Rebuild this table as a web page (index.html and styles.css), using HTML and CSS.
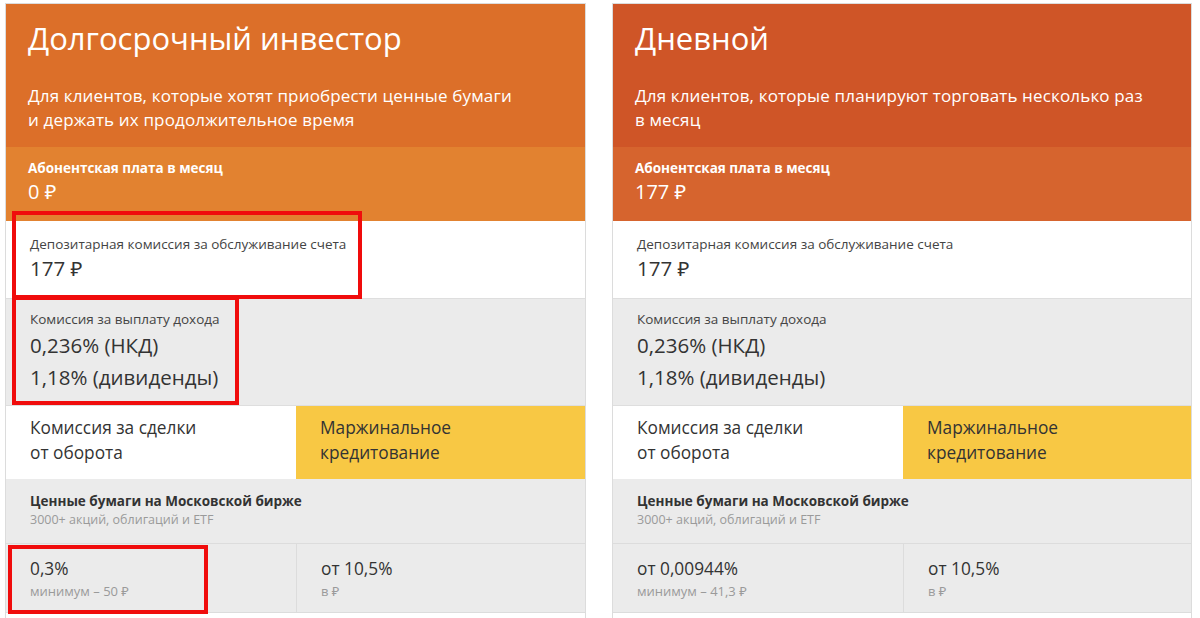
FILE: index.html
```html
<!DOCTYPE html>
<html lang="ru">
<head>
<meta charset="utf-8">
<title>Тарифы</title>
<link rel="stylesheet" href="styles.css">
</head>
<body>
<div class="page">
  <section class="card card-long">
    <header class="head">
      <h1 class="title">Долгосрочный инвестор</h1>
      <p class="desc">Для клиентов, которые хотят приобрести ценные бумаги<br>и держать их продолжительное время</p>
    </header>
    <div class="fee">
      <div class="fee-label">Абонентская плата в месяц</div>
      <div class="fee-value">0 ₽</div>
    </div>
    <div class="row row-white">
      <div class="row-label">Депозитарная комиссия за обслуживание счета</div>
      <div class="row-value">177 ₽</div>
    </div>
    <div class="row row-gray row-income">
      <div class="row-label">Комиссия за выплату дохода</div>
      <div class="row-value tall">0,236% (НКД)</div>
      <div class="row-value tall">1,18% (дивиденды)</div>
    </div>
    <div class="tabs">
      <div class="tab">Комиссия за сделки<br>от оборота</div>
      <div class="tab tab-active">Маржинальное<br>кредитование</div>
    </div>
    <div class="market">
      <div class="market-title">Ценные бумаги на Московской бирже</div>
      <div class="market-sub">3000+ акций, облигаций и ETF</div>
    </div>
    <div class="cells">
      <div class="cell">
        <div class="cell-value">0,3%</div>
        <div class="cell-sub">минимум – 50 ₽</div>
      </div>
      <div class="cell">
        <div class="cell-value">от 10,5%</div>
        <div class="cell-sub">в ₽</div>
      </div>
    </div>
    <div class="mark mark-1"></div>
    <div class="mark mark-2"></div>
    <div class="mark mark-3"></div>
  </section>

  <section class="card card-day">
    <header class="head">
      <h1 class="title">Дневной</h1>
      <p class="desc">Для клиентов, которые планируют торговать несколько раз<br>в месяц</p>
    </header>
    <div class="fee">
      <div class="fee-label">Абонентская плата в месяц</div>
      <div class="fee-value">177 ₽</div>
    </div>
    <div class="row row-white">
      <div class="row-label">Депозитарная комиссия за обслуживание счета</div>
      <div class="row-value">177 ₽</div>
    </div>
    <div class="row row-gray row-income">
      <div class="row-label">Комиссия за выплату дохода</div>
      <div class="row-value tall">0,236% (НКД)</div>
      <div class="row-value tall">1,18% (дивиденды)</div>
    </div>
    <div class="tabs">
      <div class="tab">Комиссия за сделки<br>от оборота</div>
      <div class="tab tab-active">Маржинальное<br>кредитование</div>
    </div>
    <div class="market">
      <div class="market-title">Ценные бумаги на Московской бирже</div>
      <div class="market-sub">3000+ акций, облигаций и ETF</div>
    </div>
    <div class="cells">
      <div class="cell">
        <div class="cell-value">от 0,00944%</div>
        <div class="cell-sub">минимум – 41,3 ₽</div>
      </div>
      <div class="cell">
        <div class="cell-value">от 10,5%</div>
        <div class="cell-sub">в ₽</div>
      </div>
    </div>
  </section>
</div>
</body>
</html>
```

FILE: styles.css
```css
* { box-sizing: border-box; }

html, body {
  margin: 0;
  padding: 0;
  background: #ffffff;
  font-family: "Open Sans", "Noto Sans", "Liberation Sans", sans-serif;
  color: #333333;
  overflow: hidden;
}

.page {
  display: flex;
  gap: 26px;
  padding: 3px 8px 0 5px;
  height: 618px;
}

.card {
  position: relative;
  width: 581px;
  height: 640px;
  border: 1px solid #dcdcdc;
  border-bottom: none;
  display: flex;
  flex-direction: column;
}

.card-day { width: 580px; }

/* header */
.head {
  height: 143px;
  padding: 14px 23px 0 22px;
  color: #ffffff;
}
.card-long .head { background: #dc6f29; }
.card-day .head { background: #cf5527; }

.title {
  margin: 0;
  font-weight: 400;
  font-size: 31px;
  line-height: 40px;
  letter-spacing: 0;
}

.desc {
  margin: 26px 0 0;
  font-size: 17px;
  line-height: 24px;
  letter-spacing: 0.15px;
}

/* monthly fee */
.fee {
  height: 74px;
  padding: 11px 22px 0;
  color: #ffffff;
}
.card-long .fee { background: #e28230; }
.card-day .fee { background: #d6642e; }

.fee-label {
  font-size: 13.5px;
  font-weight: 700;
  line-height: 20px;
  letter-spacing: 0;
}
.fee-value {
  font-size: 20px;
  line-height: 28px;
}

/* rows */
.row {
  padding: 13px 24px 0;
}
.row-white {
  height: 77px;
  background: #ffffff;
}
.row-gray {
  background: #ebebeb;
  border-top: 1px solid #dedede;
}
.row-income {
  height: 107px;
  padding-top: 10px;
}
.row-label {
  font-size: 13.5px;
  line-height: 20px;
  color: #444444;
  letter-spacing: 0;
}
.row-value {
  font-size: 20.5px;
  line-height: 28px;
  color: #333333;
}
.row-value.tall { line-height: 32px; }

/* tabs */
.tabs {
  display: grid;
  grid-template-columns: 290px 1fr;
  height: 74px;
  border-top: 1px solid #dedede;
}
.tab {
  padding: 9px 24px 0;
  font-size: 17.3px;
  line-height: 25px;
  color: #333333;
  background: #ffffff;
}
.tab-active {
  background: #f8c844;
}

/* market */
.market {
  height: 64px;
  padding: 12px 24px 0;
  background: #ebebeb;
}
.market-title {
  font-size: 13.5px;
  font-weight: 700;
  line-height: 20px;
  color: #333333;
}
.market-sub {
  font-size: 12.5px;
  line-height: 18px;
  color: #9a9a9a;
}

/* cells */
.cells {
  display: grid;
  grid-template-columns: 290px 1fr;
  height: 70px;
  background: #ebebeb;
  border-top: 1px solid #dcdcdc;
  border-bottom: 1px solid #dcdcdc;
}
.cell {
  padding: 13px 24px 0;
}
.cell + .cell {
  border-left: 1px solid #dcdcdc;
}
.cell-value {
  font-size: 17.3px;
  line-height: 24px;
  color: #333333;
}
.cell-sub {
  font-size: 13px;
  line-height: 20px;
  color: #9a9a9a;
}

/* red annotation frames drawn over the card */
.mark {
  position: absolute;
  border: 4px solid #f00c0c;
  pointer-events: none;
}
.mark-1 { left: 6px; top: 207px; width: 350px; height: 88px; }
.mark-2 { left: 6px; top: 292px; width: 227px; height: 109px; }
.mark-3 { left: 2px; top: 541px; width: 200px; height: 69px; }
```
